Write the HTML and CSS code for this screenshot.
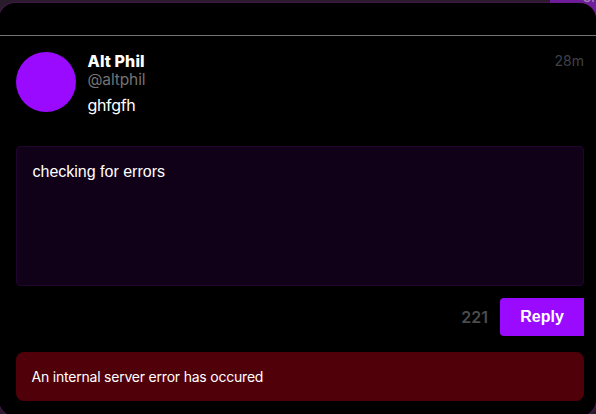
FILE: index.html
```html
<!DOCTYPE html>
<html lang="en">
<head>
<meta charset="utf-8">
<title>Reply</title>
<link rel="stylesheet" href="styles.css">
</head>
<body>
<div class="backdrop-button"><svg class="backdrop-mark" width="14" height="4" viewBox="0 0 14 4"><path d="M2 0Q5 3 8 0M11 0v2" /></svg></div>
<main class="modal">
  <header class="modal-header"></header>
  <article class="post">
    <div class="avatar"></div>
    <div class="post-body">
      <div class="name">Alt Phil</div>
      <div class="handle">@altphil</div>
      <div class="message">ghfgfh</div>
    </div>
    <time class="time">28m</time>
  </article>
  <div class="editor">checking for errors</div>
  <div class="actions">
    <span class="count">221</span>
    <button class="reply">Reply</button>
  </div>
  <div class="error"><span class="error-text">An internal server error has occured</span></div>
</main>
</body>
</html>
```
FILE: styles.css
```css
* { box-sizing: border-box; }
body {
  margin: 0;
  height: 414px;
  padding-top: 3px;
  overflow: hidden;
  background: #271c29;
  font-family: Inter, sans-serif;
  color: #fff;
}
.backdrop-button {
  position: absolute;
  top: 0;
  right: 0;
  width: 46px;
  height: 20px;
  background: #6f1f9f;
}
.backdrop-mark {
  position: absolute;
  top: 0;
  right: 0;
  fill: none;
  stroke: #a387b3;
  stroke-width: 1.4;
}
.modal {
  position: relative;
  width: 597px;
  height: 413px;
  margin-left: -1px;
  padding-left: 1px;
  border-radius: 16px;
  background: #000;
  box-shadow: 0 0 3px #6b1576;
}
.modal-header {
  height: 33px;
  border-bottom: 1px solid #737373;
}
.post {
  display: flex;
  height: 110px;
  padding: 16px 12px 0 16px;
}
.avatar {
  width: 60px;
  height: 60px;
  border-radius: 50%;
  background: #990aff;
}
.post-body {
  flex: 1;
  padding-left: 11.5px;
  font-size: 16px;
  line-height: 19px;
}
.name {
  font-weight: 800;
  letter-spacing: 0.1px;
}
.handle {
  color: #737373;
  font-size: 15.5px;
  line-height: 18px;
  letter-spacing: -0.12px;
}
.message {
  margin-top: 7px;
  line-height: 18px;
  letter-spacing: -0.35px;
}
.time {
  color: #3f4149;
  font-size: 14px;
  line-height: 18px;
}
.editor {
  height: 140px;
  margin: 0 12px 0 16px;
  padding: 16px 15.5px;
  border: 1px solid #20052f;
  border-radius: 4px;
  background: #110118;
  font: 16px/18px "Liberation Sans", sans-serif;
}
.actions {
  display: flex;
  justify-content: flex-end;
  align-items: center;
  gap: 12px;
  height: 38px;
  margin: 12px 12px 16px 0;
}
.count {
  color: #4c4c4c;
  font-size: 16px;
  font-weight: 600;
}
.reply {
  width: 84px;
  height: 38px;
  padding: 0;
  border: 0;
  border-radius: 4px 0 0 4px;
  background: #990aff;
  color: #fff;
  font: bold 16px "Liberation Sans", sans-serif;
}
.error {
  display: flex;
  align-items: center;
  height: 49px;
  margin: 0 12px 0 16px;
  padding: 0 15.5px 1px;
  border-radius: 8px;
  background: #500009;
  font-size: 14px;
  letter-spacing: -0.21px;
}
```
